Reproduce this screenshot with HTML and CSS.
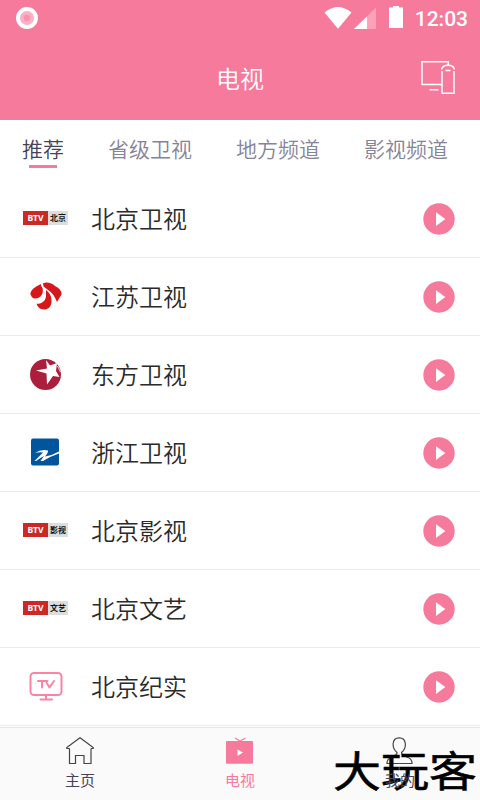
FILE: index.html
```html
<!DOCTYPE html>
<html lang="zh-CN">
<head>
  <meta charset="UTF-8" />
  <meta name="viewport" content="width=device-width, initial-scale=1.0"/>
  <title>电视</title>
  <link rel="stylesheet" href="styles.css">
</head>
<body>
  <svg class="defs" width="0" height="0">
    <symbol id="play" viewBox="0 0 32 32">
      <circle cx="16" cy="16" r="15.7" fill="#f67a9b"/>
      <path d="M13 9.2L22.3 16L13 23z" fill="#fff"/>
    </symbol>
  </svg>

  <header class="header">
    <div class="status-bar">
      <svg class="record" width="22" height="22" viewBox="0 0 22 22">
        <circle cx="11" cy="11" r="9" fill="#fab0c5" stroke="#fff" stroke-width="4"/>
        <circle cx="11" cy="11" r="3.2" fill="#f892af"/>
      </svg>
      <svg class="signals" width="80" height="24" viewBox="0 0 80 24">
        <path d="M0.5 6.5Q14 -4.5 27.5 6.5L14 22.7z" fill="#fff"/>
        <path d="M52 1.5V23H30z" fill="#faa2ba"/>
        <path d="M43 10.4V23H30z" fill="#fff"/>
        <path d="M65 1.5h4V0h6v1.5h4V22H65z" fill="#fff"/>
      </svg>
      <span class="clock">12:03</span>
    </div>
    <div class="title-bar">
      <h1>电视</h1>
      <svg class="cast" width="36" height="36" viewBox="0 0 36 36" fill="none" stroke="#fff" stroke-width="1.5">
        <path d="M21.5 24.5H2V1.7h26.3v3.2M9.5 29.8h9"/>
        <path d="M22 11v22.2h12V11M21.7 9.5C22 7 24.5 5.3 28 5.3s6 1.7 6.3 4.2M25.5 10.5h5"/>
      </svg>
    </div>
  </header>

  <nav class="tabs">
    <a class="tab active">推荐</a>
    <a class="tab">省级卫视</a>
    <a class="tab">地方频道</a>
    <a class="tab">影视频道</a>
  </nav>

  <ul class="channels">
    <li class="channel">
      <div class="logo"><span class="btv">BTV</span><span class="btv-name">北京</span></div>
      <span class="name">北京卫视</span>
      <svg class="play"><use href="#play"/></svg>
    </li>
    <li class="channel">
      <div class="logo">
        <svg width="32" height="28" viewBox="0 0 32 28" fill="#d7181b">
          <path d="M11 2C4 5 0 9 .5 12.5C2 17 6 17.500 9 15.500C12.500 13.500 13.500 10 12.500 6Q10.500 4 11 2z"/>
          <path d="M13 1.200C17-.5 22 1 25 4C30 6.500 32 10 31.500 12.500L27 20C25 14.500 22 10.500 17.500 7.500L13.500 4.500z"/>
          <path d="M16 8C20 11 22 15 21.500 20C21 25.500 18 27.500 14 27.500C9.500 27.500 8 25 6.500 21.800C12 22 16 18.500 16 14z"/>
        </svg>
      </div>
      <span class="name">江苏卫视</span>
      <svg class="play"><use href="#play"/></svg>
    </li>
    <li class="channel">
      <div class="logo">
        <svg width="32" height="32" viewBox="0 0 32 32">
          <circle cx="15.5" cy="16.5" r="15.5" fill="#ac1f3c"/>
          <path d="M16 2L20 7.500L27 5L26 13L29.500 19L23 18L17 26.500L16.500 15.500L6 12.500L17 10.500z" fill="#fff"/>
          <path d="M27.500 8L30.500 14" stroke="#fff" stroke-width=".8"/>
        </svg>
      </div>
      <span class="name">东方卫视</span>
      <svg class="play"><use href="#play"/></svg>
    </li>
    <li class="channel">
      <div class="logo">
        <svg width="29" height="28" viewBox="0 0 29 28">
          <rect width="28" height="27" y=".5" rx="2" fill="#00559c"/>
          <path d="M4 15Q10 11 17 12.500Q17.500 14.500 14 18.500Q21 17.500 28 13.500V15.500Q20 18 12 23H9.500L13 18Q9 20 5 23H3.500L12 14.500Q8 14 4 15z" fill="#fff"/>
        </svg>
      </div>
      <span class="name">浙江卫视</span>
      <svg class="play"><use href="#play"/></svg>
    </li>
    <li class="channel">
      <div class="logo"><span class="btv">BTV</span><span class="btv-name">影视</span></div>
      <span class="name">北京影视</span>
      <svg class="play"><use href="#play"/></svg>
    </li>
    <li class="channel">
      <div class="logo"><span class="btv">BTV</span><span class="btv-name">文艺</span></div>
      <span class="name">北京文艺</span>
      <svg class="play"><use href="#play"/></svg>
    </li>
    <li class="channel">
      <div class="logo">
        <svg width="34" height="30" viewBox="0 0 34 30" fill="none" stroke="#fa84a4" stroke-width="2" stroke-linecap="round" stroke-linejoin="round">
          <rect x="1.5" y="2" width="31" height="22" rx="3.5"/>
          <path d="M17 24v4.5M11.5 28.5h11.5M9 10h9.5M13 10v6.5M17.5 11.5l3 5L25 10"/>
        </svg>
      </div>
      <span class="name">北京纪实</span>
      <svg class="play"><use href="#play"/></svg>
    </li>
  </ul>

  <footer class="tab-bar">
    <a class="item">
      <svg width="28" height="28" viewBox="0 0 28 28" fill="none" stroke="#444" stroke-width="1.2">
        <path d="M3.5 11.5V26.5H9.5V18.5H18V26.5H25V11.5M3.5 11.5H.8V10.5L14 .8L27.2 10.5V11.5H25"/>
      </svg>
      <span>主页</span>
    </a>
    <a class="item active">
      <svg width="28" height="28" viewBox="0 0 28 28">
        <path d="M9 1L14 4L19.5 1" fill="none" stroke="#f67a9b" stroke-width="1.2"/>
        <rect y="4" width="27" height="22.8" rx="1" fill="#f67a9b"/>
        <path d="M11.5 12.5L17 15.5L11.5 19z" fill="#fff"/>
      </svg>
      <span>电视</span>
    </a>
    <a class="item">
      <svg width="28" height="28" viewBox="0 0 28 28" fill="none" stroke="#444" stroke-width="1.2">
        <path d="M11 15.5C5.500 11 5.500 .8 13.200 .8S21 11 15.500 15.500C15.500 18 19 19 22 20.500Q26 22 26 26.500H1Q1 22 5 20.500C8 19 11.500 18 11 15.500z"/>
      </svg>
      <span>我的</span>
    </a>
    <div class="watermark">大玩客</div>
  </footer>
</body>
</html>
```
FILE: styles.css
```css
* {
  margin: 0;
  padding: 0;
  box-sizing: border-box;
}
body {
  width: 480px;
  height: 800px;
  background: #fff;
  font-family: 'Noto Sans CJK SC', sans-serif;
  overflow: hidden;
}
.defs {
  display: block;
}
.header {
  height: 120px;
  background: #f67a9b;
  color: #fff;
}
.status-bar {
  height: 36px;
  display: flex;
  align-items: center;
  padding: 0 12px 0 16px;
}
.signals {
  margin: 0 11px 0 auto;
}
.clock {
  font-family: Roboto, sans-serif;
  font-size: 21px;
  font-weight: 500;
  line-height: 24px;
  padding-top: 2px;
}
.title-bar {
  height: 84px;
  display: grid;
  grid-template-columns: 1fr auto 1fr;
  align-items: center;
  padding-right: 24px;
  padding-left: 24px;
}
.title-bar h1 {
  grid-column: 2;
  font-size: 24px;
  font-weight: 350;
  padding-bottom: 2px;
}
.cast {
  justify-self: end;
}
.tabs {
  height: 60px;
  display: flex;
  gap: 44px;
  padding: 0 22px;
}
.tab {
  height: 48px;
  line-height: 57px;
  font-size: 21px;
  font-weight: 350;
  color: #85839a;
  white-space: nowrap;
}
.tab.active {
  color: #45435a;
  background: linear-gradient(#f67a9b, #f67a9b) center bottom / 28px 3px no-repeat;
}
.channels {
  list-style: none;
}
.channel {
  height: 78px;
  display: flex;
  align-items: center;
  padding: 0 25px 0 23px;
  border-bottom: 1px solid #ebebeb;
}
.logo {
  width: 45px;
  height: 32px;
  display: flex;
  align-items: center;
  justify-content: center;
  font-size: 8px;
  line-height: 14px;
  text-align: center;
  margin-top: -2px;
}
.btv {
  width: 25px;
  background: #ca2926;
  color: #fff;
  font-family: 'Open Sans', sans-serif;
  font-size: 8.5px;
  font-weight: 700;
}
.btv-name {
  width: 20px;
  background: #ddd;
  color: #111;
  font-weight: 700;
}
.name {
  margin-left: 23px;
  padding-bottom: 2px;
  font-size: 24px;
  font-weight: 350;
  color: #2a2a2a;
}
.play {
  width: 32px;
  height: 32px;
  margin-left: auto;
}
.tab-bar {
  position: relative;
  height: 73px;
  margin-top: 1px;
  display: flex;
  background: #fafafa;
  border-top: 1px solid #e6e6e6;
}
.item {
  flex: 1;
  display: flex;
  flex-direction: column;
  align-items: center;
  padding-top: 9px;
  font-size: 15px;
  line-height: 22px;
  color: #45435a;
}
.item span {
  margin-top: 4px;
  position: relative;
  z-index: 2;
}
.item.active {
  color: #f67a9b;
}
.watermark {
  position: absolute;
  right: 3px;
  bottom: 3px;
  font-size: 48px;
  font-weight: 400;
  line-height: 56px;
  color: #000;
  -webkit-text-stroke: 0.6px #000;
  transform: scaleY(0.87);
}
```
